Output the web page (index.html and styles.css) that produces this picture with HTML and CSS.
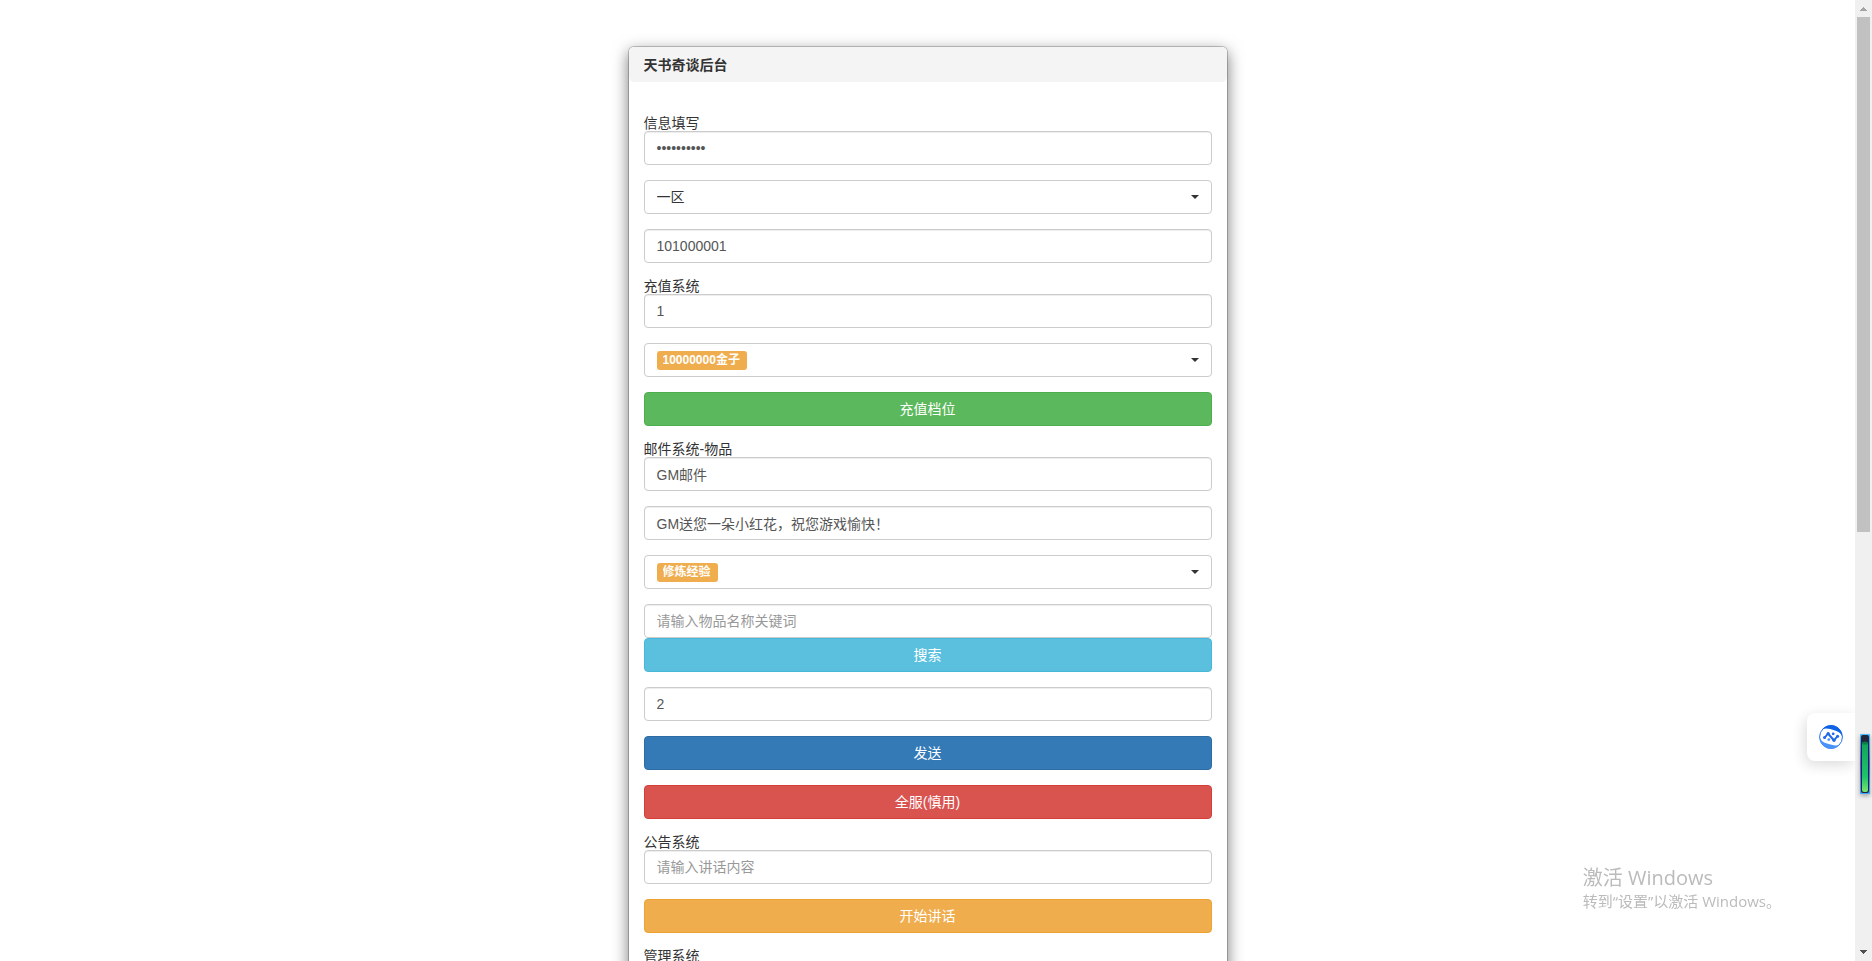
FILE: index.html
```html
<!DOCTYPE html>
<html lang="zh-CN">

<head>
    <meta charset="utf-8">
    <title>天书奇谈后台</title>
    <link rel="stylesheet" href="styles.css">
</head>

<body>
    <main class="page">
        <div class="modal">
            <header class="modal-header">
                <h1 class="modal-title">天书奇谈后台</h1>
            </header>
            <form class="modal-body">
                <div class="form-group">
                    <label for="pass">信息填写</label>
                    <input class="form-control" type="password" id="pass" value="abcdefghij">
                </div>
                <div class="form-group">
                    <div class="picker">
                        <select class="picker-select" id="zone" aria-label="区">
                            <option>一区</option>
                        </select>
                    </div>
                </div>
                <div class="form-group">
                    <input class="form-control" type="text" id="uid" value="101000001" aria-label="角色">
                </div>

                <div class="form-group">
                    <label for="chargeNum">充值系统</label>
                    <input class="form-control" type="text" id="chargeNum" value="1">
                </div>
                <div class="form-group">
                    <label class="picker">
                        <select class="picker-badge" id="chargeType" aria-label="档位">
                            <option>10000000金子</option>
                        </select>
                    </label>
                </div>
                <div class="form-group">
                    <button class="btn btn-success" type="button">充值档位</button>
                </div>

                <div class="form-group">
                    <label for="mailTitle">邮件系统-物品</label>
                    <input class="form-control" type="text" id="mailTitle" value="GM邮件">
                </div>
                <div class="form-group">
                    <input class="form-control" type="text" id="mailText" value="GM送您一朵小红花，祝您游戏愉快！" aria-label="内容">
                </div>
                <div class="form-group">
                    <label class="picker">
                        <select class="picker-badge" id="mailItem" aria-label="物品">
                            <option>修炼经验</option>
                        </select>
                    </label>
                </div>
                <div class="form-group">
                    <input class="form-control" type="text" id="keyword" placeholder="请输入物品名称关键词" aria-label="关键词">
                    <button class="btn btn-info" type="button">搜索</button>
                </div>
                <div class="form-group">
                    <input class="form-control" type="text" id="mailNum" value="2" aria-label="数量">
                </div>
                <div class="form-group">
                    <button class="btn btn-primary" type="button">发送</button>
                </div>
                <div class="form-group">
                    <button class="btn btn-danger" type="button">全服(慎用)</button>
                </div>

                <div class="form-group">
                    <label for="notice">公告系统</label>
                    <input class="form-control" type="text" id="notice" placeholder="请输入讲话内容">
                </div>
                <div class="form-group">
                    <button class="btn btn-warning" type="button">开始讲话</button>
                </div>

                <div class="form-group">
                    <span>管理系统</span>
                </div>
            </form>
        </div>
    </main>

    <div class="scrollbar">
        <svg class="scroll-arrow" viewBox="0 0 17 17" fill="#a3a3a3"><path d="M8 7h1v1h1v1h1v1h1v1H5v-1h1V9h1V8h1z" /></svg>
        <div class="scroll-track">
            <div class="scroll-thumb"></div>
        </div>
        <svg class="scroll-arrow" viewBox="0 0 17 17" fill="#505050"><path d="M5 6h7v1h-1v1h-1v1H9v1H8V9H7V8H6V7H5z" /></svg>
    </div>

    <aside class="watermark">
        <p class="watermark-title">激活 Windows</p>
        <p class="watermark-text">转到“设置”以激活 Windows。</p>
    </aside>

    <button class="float-tool" type="button" aria-label="工具">
        <svg width="24" height="24" viewBox="0 0 24 24" fill="none">
            <circle cx="12" cy="12" r="11.4" stroke="#2b74ea" />
            <path d="M3 4.500A11.400 11.400 0 0 1 23.400 12C22 8 19.500 6.500 16 5.500 11 4 7 2.500 3 4.500z" fill="#0f62e6" />
            <path d="M21 19.500A11.400 11.400 0 0 1 .6 12C2 16 4.500 17.500 8 18.500 13 20 17 21.500 21 19.500z" fill="#4a92fb" />
            <path d="M5.500 13l3.500-4.500 3 3.500M12 12l3 3.500 3.500-4.500" stroke="#2268e8" stroke-width="2" />
            <circle cx="5.500" cy="12.500" r="1.500" fill="#2268e8" />
            <circle cx="9.200" cy="8.600" r="1.600" fill="#2268e8" />
            <circle cx="14.200" cy="8.800" r="1.400" fill="#2268e8" />
            <circle cx="9.800" cy="14.600" r="1.400" fill="#4a92fb" />
            <circle cx="15" cy="15.200" r="1.600" fill="#2268e8" />
            <circle cx="18.600" cy="11.200" r="1.500" fill="#2268e8" />
        </svg>
    </button>

    <svg class="meter" width="10" height="60" viewBox="0 0 10 60">
        <defs>
            <linearGradient id="meterEdge" x2="0" y2="1">
                <stop offset="0" stop-color="#4dbcff" />
                <stop offset=".5" stop-color="#5a55ee" />
                <stop offset="1" stop-color="#3fa8ff" />
            </linearGradient>
            <linearGradient id="meterFill" x2="0" y2="1">
                <stop offset="0" stop-color="#12a35c" />
                <stop offset=".7" stop-color="#1fc468" />
                <stop offset="1" stop-color="#7be36c" />
            </linearGradient>
        </defs>
        <rect width="10" height="60" rx="1" fill="url(#meterEdge)" />
        <rect x="1" y="1" width="8" height="58" rx="2" fill="#22263a" />
        <rect x="2" y="8" width="6" height="50" rx="2" fill="url(#meterFill)" />
        <ellipse cx="5" cy="9" rx="3" ry="1.500" fill="#0c7d48" />
    </svg>
</body>

</html>
```

FILE: styles.css
```css
* {
    box-sizing: border-box;
}

body {
    margin: 0;
    height: 100vh;
    overflow: hidden;
    display: grid;
    grid-template-columns: 1fr 17px;
    color: #333;
    background: #fff;
    font-family: "Liberation Sans", "Noto Sans CJK SC", sans-serif;
    font-size: 14px;
    line-height: 20px;
}

.page {
    height: 100vh;
    overflow: hidden;
    padding: 46px 16px 0;
}

.modal {
    max-width: 600px;
    margin: 0 auto;
    border: 1px solid rgba(0, 0, 0, .2);
    border-radius: 6px;
    background: #fff;
    background-clip: padding-box;
    box-shadow: 0 5px 15px rgba(0, 0, 0, .5);
}

.modal-header {
    padding: 8px 15px 7px;
    border-radius: 5px;
    background: #f4f4f4;
}

.modal-title {
    margin: 0;
    font-size: 14px;
    line-height: 20px;
}

.modal-body {
    padding: 33px 15px 15px;
}

.form-group {
    display: flex;
    flex-direction: column;
    margin-bottom: 15px;
    line-height: 16px;
}

.form-control,
.picker,
.btn {
    width: 100%;
    height: 34px;
    padding: 6px 12px;
    border: 1px solid #ccc;
    border-radius: 4px;
    background: #fff;
    font-family: inherit;
    font-size: 14px;
    line-height: 20px;
}

.form-control {
    color: #555;
    box-shadow: inset 0 1px 1px rgba(0, 0, 0, .075);

    &::placeholder {
        color: #999;
    }

    &:focus {
        border-color: #66afe9;
        outline: 0;
    }
}

.picker {
    display: flex;
    align-items: center;
    justify-content: space-between;
    cursor: pointer;

    &::after {
        content: "";
        border-top: 4px solid #333;
        border-left: 4px solid transparent;
        border-right: 4px solid transparent;
    }
}

.picker-select,
.picker-badge {
    appearance: none;
    margin: 0;
    border: 0;
    font-family: inherit;
    cursor: pointer;
}

.picker-select {
    flex: 1;
    padding: 0;
    color: #333;
    background: none;
    font-size: 14px;
    line-height: 20px;
}

.picker-badge {
    height: 19px;
    padding: 0 6px 1px;
    border-radius: 3px;
    color: #fff;
    background: #f0ad4e;
    font-size: 12px;
    font-weight: bold;
    line-height: 18px;
}

.btn {
    color: #fff;
    text-align: center;
    cursor: pointer;
}

.btn-success {
    background: #5cb85c;
    border-color: #4cae4c;
}

.btn-info {
    background: #5bc0de;
    border-color: #46b8da;
}

.btn-primary {
    background: #337ab7;
    border-color: #2e6da4;
}

.btn-danger {
    background: #d9534f;
    border-color: #d43f3a;
}

.btn-warning {
    background: #f0ad4e;
    border-color: #eea236;
}

.scrollbar {
    display: flex;
    flex-direction: column;
    height: 100vh;
    background: #f0f0f0;
}

.scroll-arrow {
    width: 17px;
    height: 17px;
}

.scroll-track {
    flex: 1;
    padding: 0 2px;
}

.scroll-thumb {
    height: calc(100% * 5 / 9);
    background: #c1c1c1;
}

/* things that float over the page */
.watermark {
    position: fixed;
    right: 91px;
    bottom: 49px;
    color: #bbb;
    font-family: "Open Sans", "Noto Sans CJK SC", sans-serif;
}

.watermark p {
    margin: 0;
}

.watermark-title {
    font-size: 20px;
    line-height: 24px;
}

.watermark-text {
    font-size: 15px;
    line-height: 22px;
}

.float-tool {
    position: fixed;
    right: 17px;
    bottom: 200px;
    display: flex;
    align-items: center;
    justify-content: center;
    width: 48px;
    height: 48px;
    padding: 0;
    border: 0;
    border-radius: 8px 0 0 8px;
    background: #fff;
    box-shadow: -2px 4px 14px rgba(0, 0, 0, .14);
    clip-path: inset(-24px 0 -24px -24px);
    cursor: pointer;
}

.meter {
    position: fixed;
    right: 2px;
    bottom: 167px;
    filter: drop-shadow(0 2px 2px rgba(0, 0, 0, .3));
}
```
